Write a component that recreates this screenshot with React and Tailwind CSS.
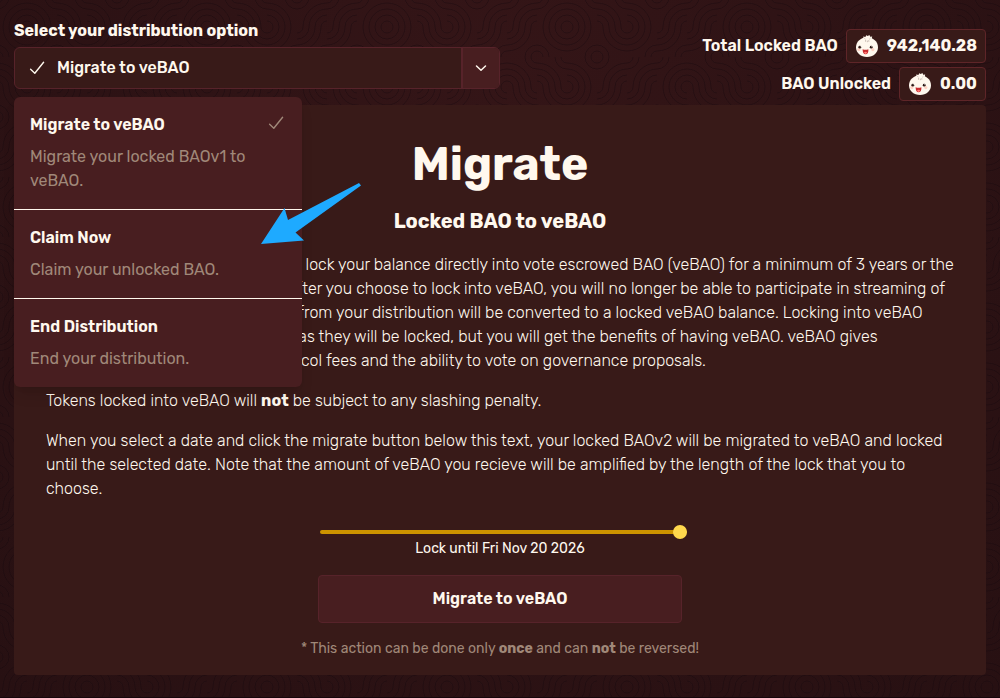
import { useState } from 'react'

// Unit squares of the backdrop whose arcs turn the other way, which links rings into winding bands.
const FLIPPED = ['0-3', '1-2', '2-1', '3-0', '3-3', '4-5', '5-4', '1-5', '4-2', '5-1']

function arcsFor(col, row) {
  const flipped = FLIPPED.includes(`${col}-${row}`)
  const x = col * 30
  const y = row * 30
  const right = flipped ? col % 2 === 0 : col % 2 === 1
  const bottom = row % 2 === 1
  const quarter = (atRight, atBottom, r) => {
    const cx = x + (atRight ? 30 : 0)
    const cy = y + (atBottom ? 30 : 0)
    const dx = atRight ? -r : r
    const dy = atBottom ? -r : r
    return `M${cx + dx} ${cy}A${r} ${r} 0 0 ${dx * dy > 0 ? 1 : 0} ${cx} ${cy + dy}`
  }
  return [6, 12, 18, 24].map((r) => quarter(right, bottom, r)).join('') +
    [6, 12].map((r) => quarter(!right, !bottom, r)).join('')
}

const squares = Array.from({ length: 36 }, (_, i) => arcsFor(i % 6, Math.floor(i / 6))).join('')

function Backdrop() {
  return (
    <svg className="absolute inset-0 -z-10 h-full w-full" aria-hidden="true">
      <defs>
        <pattern id="rings" x="27" y="27" width="180" height="180" patternUnits="userSpaceOnUse">
          <path d={squares} fill="none" stroke="#12040a" strokeOpacity="0.38" strokeWidth="1" />
        </pattern>
      </defs>
      <rect width="100%" height="100%" fill="url(#rings)" />
    </svg>
  )
}

function Check({ className }) {
  return (
    <svg viewBox="0 0 16 16" className={className} fill="none" stroke="currentColor" strokeWidth="1.4" strokeLinecap="round" strokeLinejoin="round" aria-hidden="true">
      <path d="M1.6 9.3 5.8 13.2 14.6 2.3" />
    </svg>
  )
}

function Bao() {
  return (
    <svg viewBox="0 0 24 24" className="size-6" aria-hidden="true">
      <path d="M8.6 5 8.2 2.600 10.400 3 11.200 1.200 12.800 2 14.400 1 15.200 2.800 17.200 2.400 16.600 5Z" fill="#fff8ee" />
      <path d="M12 3.200C18 3.200 23 7.600 23 13.200 23 18.800 18.200 23 12 23S1 18.800 1 13.200C1 7.600 6 3.200 12 3.200Z" fill="#fff8ee" />
      <path d="M10.600 5.600v2.200M12.400 6.600v1.600M14.300 5.800c-.8.5-.8 1.300-.3 2M9 3.800l1 1M15.500 4l-1 .8" fill="none" stroke="#b9aaa2" strokeWidth=".7" />
      <circle cx="3.800" cy="15.600" r="1.600" fill="#ffd2c4" />
      <circle cx="17.800" cy="15.600" r="1.600" fill="#ffd2c4" />
      <circle cx="4.800" cy="13.200" r="1.400" fill="#2b1512" />
      <circle cx="16.200" cy="13.200" r="1.400" fill="#2b1512" />
      <circle cx="5.200" cy="12.800" r=".45" fill="#fff" />
      <circle cx="16.600" cy="12.800" r=".45" fill="#fff" />
      <path d="M7.600 15.200q3 1 5.800 0c.2 3-.8 5-2.800 5S7.600 18.200 7.600 15.200Z" fill="#c92a2e" />
      <path d="M9 18.200q1.600-1 3.200 0-.5 1.700-1.600 1.700T9 18.200Z" fill="#ff7b78" />
    </svg>
  )
}

function Balance({ label, amount }) {
  return (
    <div className="flex items-center gap-2">
      <dt className="font-semibold">{label}</dt>
      <dd className="flex h-[34px] items-center gap-2 rounded border border-[#5e2528] bg-[#381a18] px-2">
        <Bao />
        {amount}
      </dd>
    </div>
  )
}

const options = [
  { title: 'Migrate to veBAO', text: 'Migrate your locked BAOv1 to veBAO.' },
  { title: 'Claim Now', text: 'Claim your unlocked BAO.' },
  { title: 'End Distribution', text: 'End your distribution.' },
]

function OptionMenu({ selected, onSelect }) {
  return (
    <ul role="listbox" aria-labelledby="option-label" className="absolute top-full left-0 z-10 mt-2 w-72 divide-y divide-[#fff8ee] overflow-hidden rounded-md bg-[#481e20] font-normal shadow-lg">
      {options.map(({ title, text }, i) => (
        <li key={title} role="option" aria-selected={i === selected} onClick={() => onSelect(i)} className="cursor-pointer p-4">
          <div className="flex items-start justify-between font-semibold">
            {title}
            {i === selected && <Check className="mt-0.5 mr-0.5 size-4 text-[#a08879]" />}
          </div>
          <p className="mt-2 text-[#a08879]">{text}</p>
        </li>
      ))}
    </ul>
  )
}

function Pointer() {
  return (
    <svg viewBox="0 0 102 64" className="pointer-events-none absolute top-[182px] left-[260px] z-20 h-16 w-[102px]" aria-hidden="true">
      <path d="M1 62 24.500 26 28 38 99 1 101 3.500 35.500 50.500 44 58.500Z" fill="#1eaaff" />
    </svg>
  )
}

export default function App() {
  const [selected, setSelected] = useState(0)
  const [open, setOpen] = useState(true)
  const choose = (i) => {
    setSelected(i)
    setOpen(false)
  }
  return (
    <div className="relative isolate min-h-screen border-b border-[#16060b] bg-radial-[at_50%_10%] from-[#341517] to-[#271012] px-3.5 pt-[19px] pb-[22px] font-['Rubik','Roboto',sans-serif] text-base leading-6 text-[#fff8ee]">
      <Backdrop />
      <header className="flex items-start justify-between font-bold">
        <div className="relative w-1/2">
          <label id="option-label" htmlFor="option">Select your distribution option</label>
          <button id="option" type="button" aria-haspopup="listbox" aria-expanded={open} onClick={() => setOpen(!open)} className="mt-1 flex h-[42px] w-full items-stretch overflow-hidden rounded-md border border-[#57232a] bg-[#381a18] font-medium">
            <span className="flex flex-1 items-center gap-3 px-3.5">
              <Check className="size-4" />
              {options[selected].title}
            </span>
            <span className="flex w-[38px] items-center justify-center border-l-2 border-[#57232a] bg-[#481e20]">
              <svg viewBox="0 0 12 12" className="size-3" fill="none" stroke="currentColor" strokeWidth="1.500" strokeLinecap="round" strokeLinejoin="round" aria-hidden="true">
                <path d="M1.500 4 6 8.300 10.500 4" />
              </svg>
            </span>
          </button>
          {open && <OptionMenu selected={selected} onSelect={choose} />}
        </div>
        <dl className="mt-2.5 grid justify-items-end gap-1">
          <Balance label="Total Locked BAO" amount="942,140.28" />
          <Balance label="BAO Unlocked" amount="0.00" />
        </dl>
      </header>

      <main className="mt-1 rounded bg-[#381a18] px-8 pt-8 pb-4">
        <div className="text-center font-bold">
          <h1 className="text-[46px] leading-14">Migrate</h1>
          <h2 className="mt-4 text-xl leading-6">Locked BAO to veBAO</h2>
        </div>
        <div className="mt-5 space-y-4 font-light">
          <p>
            This migrate option will allow you to lock your balance directly into vote escrowed BAO (veBAO) for a minimum of 3 years or the<br />
            maximum lock of 4 years in total. After you choose to lock into veBAO, you will no longer be able to participate in streaming of<br />
            your accounts. The remaining BAO from your distribution will be converted to a locked veBAO balance. Locking into veBAO<br />
            means old tokens are not available as they will be locked, but you will get the benefits of having veBAO. veBAO gives<br />
            holders a larger portion of the protocol fees and the ability to vote on governance proposals.
          </p>
          <p>Tokens locked into veBAO will <strong className="font-bold">not</strong> be subject to any slashing penalty.</p>
          <p>
            When you select a date and click the migrate button below this text, your locked BAOv2 will be migrated to veBAO and locked<br />
            until the selected date. Note that the amount of veBAO you recieve will be amplified by the length of the lock that you to<br />
            choose.
          </p>
        </div>
        <div className="mx-auto mt-6 flex max-w-[364px] flex-col">
          <input
            id="lock"
            type="range"
            defaultValue="100"
            className="-mr-[5px] ml-0.5 h-3.5 cursor-pointer appearance-none bg-transparent [&::-webkit-slider-runnable-track]:h-1 [&::-webkit-slider-runnable-track]:rounded-sm [&::-webkit-slider-runnable-track]:bg-[#cc9300] [&::-webkit-slider-thumb]:-mt-[5px] [&::-webkit-slider-thumb]:size-3.5 [&::-webkit-slider-thumb]:appearance-none [&::-webkit-slider-thumb]:rounded-full [&::-webkit-slider-thumb]:bg-[#ffd84d]"
          />
          <label htmlFor="lock" className="text-center text-sm leading-5">Lock until Fri Nov 20 2026</label>
          <button type="button" className="mt-4 h-12 rounded border border-[#57232a] bg-[#481e20] font-semibold">Migrate to veBAO</button>
        </div>
        <p className="mt-4 text-center text-sm leading-5 text-[#a08879]">
          * This action can be done only <strong>once</strong> and can <strong>not</strong> be reversed!
        </p>
      </main>
      <Pointer />
    </div>
  )
}
